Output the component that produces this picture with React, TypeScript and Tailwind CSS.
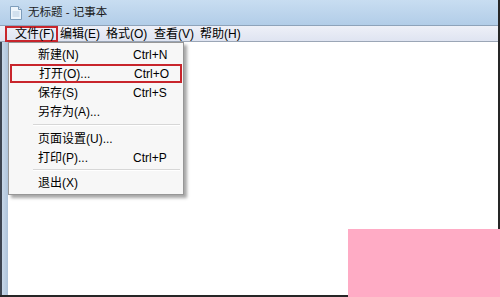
import React from "react";

const font = { fontFamily: '"Liberation Sans", "Noto Sans CJK SC", sans-serif' };

const menus = [
  { label: "编辑(E)", w: "w-[46px]" },
  { label: "格式(O)", w: "w-[48px]" },
  { label: "查看(V)", w: "w-[46px]" },
  { label: "帮助(H)", w: "w-[46px]" },
];

type Item = { label?: string; key?: string; sep?: string; active?: boolean };

const items: Item[] = [
  { label: "新建(N)", key: "Ctrl+N" },
  { label: "打开(O)...", key: "Ctrl+O", active: true },
  { label: "保存(S)", key: "Ctrl+S" },
  { label: "另存为(A)..." },
  { sep: "h-[8px]" },
  { label: "页面设置(U)..." },
  { label: "打印(P)...", key: "Ctrl+P" },
  { sep: "h-[6px]" },
  { label: "退出(X)" },
];

function NotepadIcon() {
  return (
    <svg width="14" height="16" viewBox="0 0 14 16">
      <path d="M1.5 1.5h8l3 3v10h-11z" fill="#eef5fc" stroke="#7e9dbb" />
      <path d="M9.5 1.5v3h3" fill="#d5e4f2" stroke="#7e9dbb" />
      <path d="M3.5 7h7M3.5 9h7M3.5 11h7" stroke="#b6cbe0" />
    </svg>
  );
}

export default function App() {
  return (
    <div className="relative w-[500px] h-[297px] overflow-hidden bg-white text-[12px] text-black" style={font}>
      <div className="flex flex-col h-full border-r-2 border-b-2 border-[#262626]">
        {/* title bar */}
        <div className="h-[26px] flex items-center gap-[5px] pl-[9px] bg-gradient-to-b from-[#c8ddf1] to-[#b2cde8] border-b border-[#8ea3ba]">
          <NotepadIcon />
          <span className="text-[11.5px] text-[#1b1b1b]">无标题 - 记事本</span>
        </div>
        {/* menu bar */}
        <div className="h-[16px] flex items-center pl-[5px] bg-gradient-to-b from-[#eef0f8] to-[#dfe4f1] border-b border-[#9ba6b6]">
          <div className="w-[53px] h-[16px] flex items-center pl-[8px] border-2 border-[#c8252c]">文件(F)</div>
          <div className="ml-[2px] flex">
            {menus.map((m) => (
              <div key={m.label} className={`${m.w} leading-[16px]`}>
                {m.label}
              </div>
            ))}
          </div>
        </div>
        {/* edit area */}
        <div className="flex-1 flex">
          <div className="w-[8px] border-l-2 border-[#3d4450] bg-gradient-to-r from-[#c7d7e8] to-[#aec3da]" />
          <div className="flex-1 bg-white" />
        </div>
      </div>

      {/* file dropdown */}
      <div className="absolute left-[8px] top-[42px] w-[176px] pt-[2px] pb-[2px] bg-[#f7f7f7] border border-[#979797] shadow-[3px_3px_3px_rgba(0,0,0,0.35)]">
        {items.map((it, i) =>
          it.sep ? (
            <div key={i} className={`${it.sep} flex items-center pl-[24px] pr-[3px]`}>
              <div className="w-full h-[2px] border-t border-[#d7d7d7] border-b border-b-white" />
            </div>
          ) : (
            <div
              key={i}
              className={`h-[19px] flex items-center ${
                it.active ? "mx-[1px] pl-[27px] border-2 border-[#c8252c]" : "pl-[29px]"
              }`}
            >
              <span className="w-[95px]">{it.label}</span>
              {it.key && <span>{it.key}</span>}
            </div>
          )
        )}
      </div>

      {/* pink overlay */}
      <div className="absolute left-[348px] top-[229px] w-[152px] h-[68px] bg-[#ffabc5]" />
    </div>
  );
}
